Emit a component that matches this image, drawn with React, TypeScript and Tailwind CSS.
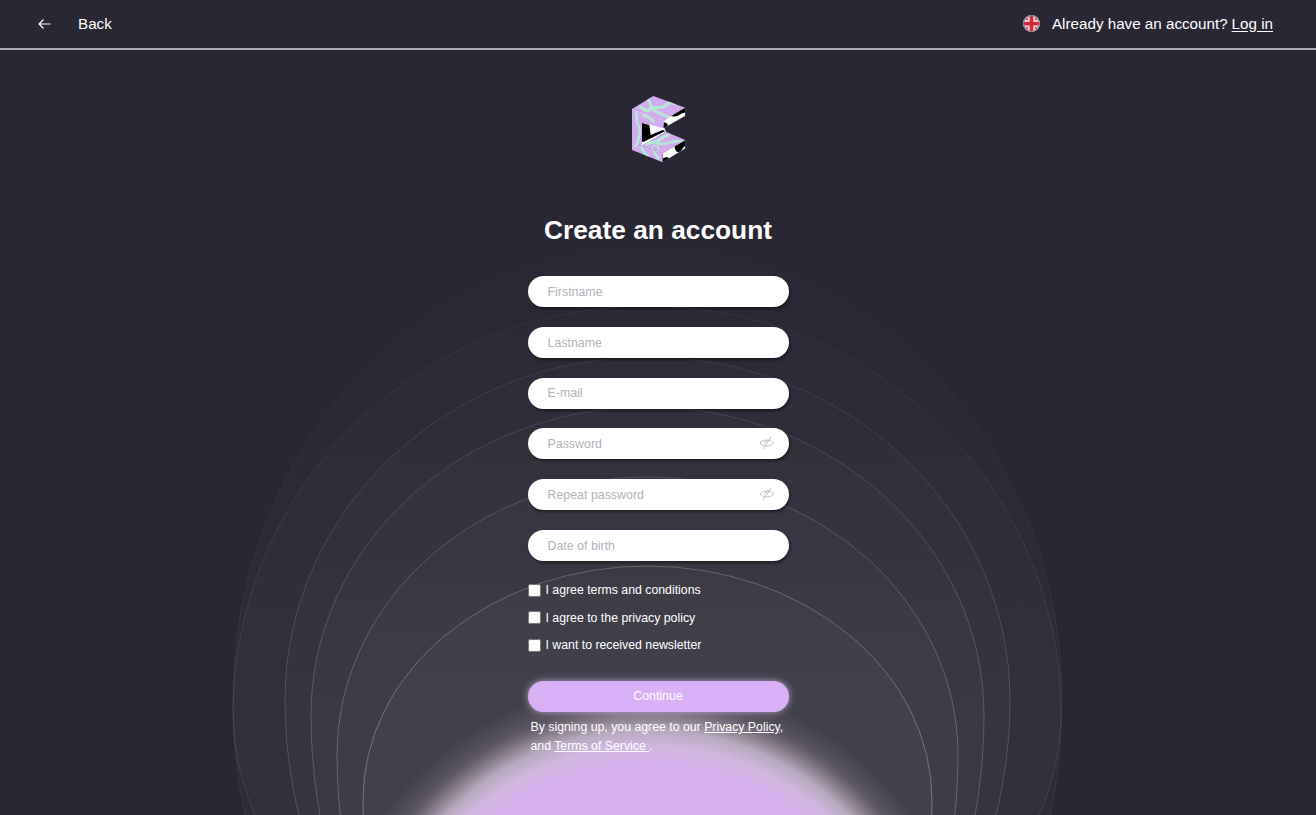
const font = { fontFamily: '"Liberation Sans", Arial, sans-serif' };

// left x, right x, centre y, top radius, bottom radius, stroke alpha
const rings = [
  { l: 233, r: 1062, cy: 700, rt: 452, rb: 480, a: 0.06 },
  { l: 233, r: 1061, cy: 712, rt: 406, rb: 322, a: 0.09 },
  { l: 285, r: 1010, cy: 700, rt: 343, rb: 420, a: 0.15 },
  { l: 311, r: 984, cy: 715, rt: 308, rb: 440, a: 0.18 },
  { l: 337, r: 958, cy: 755, rt: 278, rb: 420, a: 0.22 },
  { l: 363, r: 932, cy: 800, rt: 234, rb: 420, a: 0.27 },
];

function Backdrop() {
  return (
    <svg className="absolute inset-0 w-full h-full pointer-events-none" viewBox="0 0 1316 815">
      <defs>
        <linearGradient id="ringLine" gradientUnits="userSpaceOnUse" x1="0" y1="250" x2="0" y2="720">
          <stop offset="0" stopColor="#ffffff" stopOpacity="0.35" />
          <stop offset="1" stopColor="#ffffff" stopOpacity="1" />
        </linearGradient>
        <linearGradient id="ringFill" gradientUnits="userSpaceOnUse" x1="0" y1="250" x2="0" y2="700">
          <stop offset="0" stopColor="#ffffff" stopOpacity="0.004" />
          <stop offset="1" stopColor="#ffffff" stopOpacity="0.022" />
        </linearGradient>
        <radialGradient id="glow" gradientUnits="userSpaceOnUse" cx="647.5" cy="1010" r="330">
          <stop offset="0.73" stopColor="#d8aef0" />
          <stop offset="0.8" stopColor="#d2b6e0" />
          <stop offset="0.85" stopColor="#bcaec4" stopOpacity="0.95" />
          <stop offset="0.89" stopColor="#9d8f9e" stopOpacity="0.75" />
          <stop offset="0.93" stopColor="#7a7080" stopOpacity="0.45" />
          <stop offset="1" stopColor="#6a6470" stopOpacity="0" />
        </radialGradient>
      </defs>
      {rings.map((g, i) => {
        const rx = (g.r - g.l) / 2;
        return (
          <path
            key={i}
            d={`M${g.l} ${g.cy}A${rx} ${g.rt} 0 0 1 ${g.r} ${g.cy}A${rx} ${g.rb} 0 0 1 ${g.l} ${g.cy}Z`}
            fill="url(#ringFill)"
            stroke="url(#ringLine)"
            strokeOpacity={g.a}
          />
        );
      })}
      <circle cx="647.5" cy="1010" r="330" fill="url(#glow)" />
    </svg>
  );
}

function UkFlag() {
  return (
    <svg width="17" height="17" viewBox="0 0 34 34">
      <defs>
        <clipPath id="flagClip">
          <circle cx="17" cy="17" r="17" />
        </clipPath>
      </defs>
      <g clipPath="url(#flagClip)">
        <rect width="34" height="34" fill="#33478f" />
        <path d="M0 0L34 34M34 0L0 34" stroke="#f2f2f2" strokeWidth="7" />
        <path d="M0 0L34 34M34 0L0 34" stroke="#d5283a" strokeWidth="3" />
        <path d="M17 0V34M0 17H34" stroke="#f4f4f4" strokeWidth="12" />
        <path d="M17 0V34M0 17H34" stroke="#d5283a" strokeWidth="7.5" />
      </g>
      <circle cx="17" cy="17" r="16" fill="none" stroke="#9a9aa5" strokeOpacity="0.6" strokeWidth="2" />
    </svg>
  );
}

function Logo() {
  return (
    <svg width="85" height="90" viewBox="0 0 255 270">
      <defs>
        <clipPath id="topFace">
          <polygon points="48,72 112,33 208,68 145,105" />
        </clipPath>
        <clipPath id="frontFace">
          <polygon points="48,72 145,105 142,130 78,112 78,182 140,205 140,232 48,195" />
        </clipPath>
        <clipPath id="lowFace">
          <polygon points="78,182 150,140 208,165 140,205" />
        </clipPath>
        <clipPath id="sideTop">
          <polygon points="145,105 208,68 208,92 142,130" />
        </clipPath>
        <clipPath id="sideLow">
          <polygon points="140,205 208,165 208,190 140,232" />
        </clipPath>
      </defs>
      {/* inside of the notch */}
      <polygon points="78,112 145,128 150,140 78,182" fill="#ffffff" />
      <polygon points="78,114 100,120 104,150 140,135 148,138 84,170 78,170" fill="#000000" />
      <g clipPath="url(#frontFace)">
        <rect x="40" y="60" width="180" height="180" fill="#d3a9f0" />
        <path d="M58 80C70 92 54 110 68 122C76 130 70 170 56 186" fill="none" stroke="#b5e8d4" strokeWidth="8" />
        <path d="M80 88C92 98 104 96 114 112" fill="none" stroke="#b5e8d4" strokeWidth="9" />
        <path d="M74 186C84 196 82 206 98 214" fill="none" stroke="#b5e8d4" strokeWidth="9" />
        <path d="M112 198C120 206 116 214 130 222" fill="none" stroke="#b5e8d4" strokeWidth="8" />
        <path d="M48 72L145 105" stroke="#ffffff" strokeWidth="3" />
        <path d="M78 182L140 205" stroke="#ffffff" strokeWidth="2" />
      </g>
      <g clipPath="url(#topFace)">
        <rect x="40" y="30" width="180" height="80" fill="#d3a9f0" />
        <path d="M100 34C92 50 110 58 104 70C96 84 84 74 70 64" fill="none" stroke="#b5e8d4" strokeWidth="10" />
        <path d="M104 70C124 66 140 72 150 60C158 52 170 52 180 58" fill="none" stroke="#b5e8d4" strokeWidth="10" />
        <path d="M108 72C118 82 136 84 160 98" fill="none" stroke="#b5e8d4" strokeWidth="9" />
      </g>
      <g clipPath="url(#lowFace)">
        <rect x="70" y="135" width="145" height="75" fill="#d3a9f0" />
        <path d="M88 180C104 168 120 176 132 164C140 156 150 152 160 150" fill="none" stroke="#b5e8d4" strokeWidth="9" />
        <path d="M118 172C132 182 150 176 164 172C176 170 186 166 196 168" fill="none" stroke="#b5e8d4" strokeWidth="8" />
        <circle cx="118" cy="192" r="10" fill="none" stroke="#b5e8d4" strokeWidth="4" />
      </g>
      <g clipPath="url(#sideTop)">
        <rect x="130" y="60" width="85" height="80" fill="#ffffff" />
        <path d="M160 88L208 64V84C198 80 190 94 178 94C170 96 164 94 160 88Z" fill="#000000" />
        <path d="M140 112C150 112 160 116 152 128L132 136Z" fill="#000000" />
      </g>
      <g clipPath="url(#sideLow)">
        <rect x="130" y="160" width="85" height="80" fill="#ffffff" />
        <path d="M176 184L208 166V182C200 186 198 200 186 202C180 200 176 192 176 184Z" fill="#000000" />
        <path d="M136 224C148 212 164 216 162 226L140 238Z" fill="#000000" />
      </g>
    </svg>
  );
}

function EyeOff() {
  return (
    <svg width="16" height="14" viewBox="0 0 16 14" fill="none" stroke="#bcbcc0" strokeWidth="0.9">
      <path d="M1 7C4.5 3 11.5 3 15 7C11.5 11 4.5 11 1 7Z" />
      <path d="M5.6 7.4A2.5 2.5 0 0 1 9.8 5.4" />
      <path d="M4 13L12 1" />
    </svg>
  );
}

function Field({ label, secret }: { label: string; secret?: boolean }) {
  return (
    <div className="relative h-[31px] shrink-0">
      <input
        placeholder={label}
        className="w-full h-full rounded-[16px] bg-white pl-5 pr-10 pt-[0.6px] text-[12.4px] text-gray-800 placeholder:text-[#b3b3ba] outline-none shadow-[1px_2px_3px_rgba(0,0,0,0.45)]"
      />
      {secret && (
        <div className="absolute right-[14px] top-[8px]">
          <EyeOff />
        </div>
      )}
    </div>
  );
}

function Check({ label }: { label: string }) {
  return (
    <label className="flex items-center gap-[5px] h-[14px] text-[12.3px] text-white">
      <input type="checkbox" className="m-0 w-[13px] h-[13px]" />
      <span>{label}</span>
    </label>
  );
}

export default function App() {
  return (
    <div className="relative h-screen overflow-hidden bg-[#282733] text-white" style={font}>
      <Backdrop />

      {/* Top bar */}
      <header className="relative h-[50px] flex items-center justify-between border-b-[2px] border-[#a9a9ad] pl-[38px] pr-[43px] text-[15.2px]">
        <div className="flex items-center gap-[27px]">
          <svg width="13" height="12" viewBox="0 0 13 12" fill="none" stroke="#ffffff" strokeWidth="1.2">
            <path d="M12.5 6H1M5.5 1.5L1 6l4.5 4.5" />
          </svg>
          <span>Back</span>
        </div>
        <div className="flex items-center">
          <UkFlag />
          <span className="ml-3">Already have an account?</span>
          <a className="ml-1 underline underline-offset-2">Log in</a>
        </div>
      </header>

      {/* Form */}
      <main className="relative flex flex-col items-center">
        <div className="mt-[35px] w-[85px] h-[90px]">
          <Logo />
        </div>
        <h1 className="mt-[40px] text-[26.3px] leading-[30px] font-bold">Create an account</h1>
        <div className="mt-[31px] w-[261px] flex flex-col gap-[19.8px]">
          <Field label="Firstname" />
          <Field label="Lastname" />
          <Field label="E-mail" />
          <Field label="Password" secret />
          <Field label="Repeat password" secret />
          <Field label="Date of birth" />
        </div>
        <div className="mt-[22.5px] w-[261px] flex flex-col gap-[13.5px]">
          <Check label="I agree terms and conditions" />
          <Check label="I agree to the privacy policy" />
          <Check label="I want to received newsletter" />
        </div>
        <button className="mt-[28.5px] w-[261px] h-[31px] rounded-[16px] bg-[#d9aff5] text-[12.4px] text-white shadow-[0_0_7px_rgba(232,200,250,0.7)]">
          Continue
        </button>
        <p className="mt-[6px] w-[261px] pl-[3px] text-[12.3px] leading-[19px]">
          By signing up, you agree to our <a className="underline">Privacy Policy</a>,
          <br />
          and <a className="underline">Terms of Service </a>.
        </p>
      </main>
    </div>
  );
}
